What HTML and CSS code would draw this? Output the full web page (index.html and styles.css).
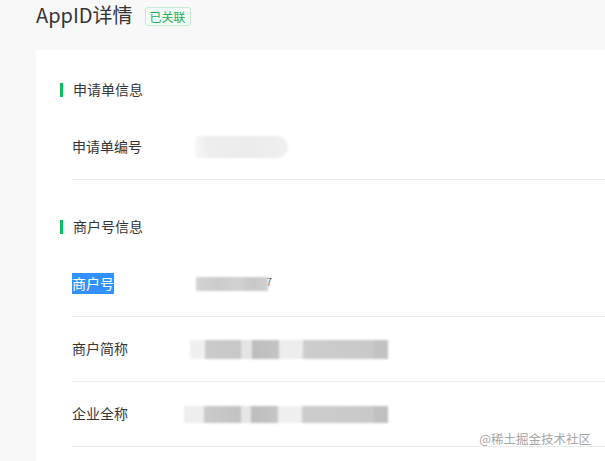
FILE: index.html
```html
<!DOCTYPE html>
<html lang="zh-CN">
<head>
<meta charset="utf-8">
<title>AppID详情</title>
<link rel="stylesheet" href="styles.css">
</head>
<body>
<div class="page">
  <header class="header">
    <h1 class="title">AppID详情</h1>
    <span class="badge">已关联</span>
  </header>
  <main class="card">
    <section class="section">
      <div class="section-head"><i class="bar"></i><span class="head-text">申请单信息</span></div>
      <div class="rows">
        <div class="row">
          <div class="label">申请单编号</div>
          <div class="value"><span class="blur blur-a"></span></div>
        </div>
      </div>
    </section>
    <section class="section section-2">
      <div class="section-head"><i class="bar"></i><span class="head-text">商户号信息</span></div>
      <div class="rows">
        <div class="row">
          <div class="label"><span class="selected">商户号</span></div>
          <div class="value"><span class="blur blur-b"></span><span class="tail">7</span></div>
        </div>
        <div class="row">
          <div class="label">商户简称</div>
          <div class="value value-c"><span class="blur blur-c"></span></div>
        </div>
        <div class="row">
          <div class="label">企业全称</div>
          <div class="value value-d"><span class="blur blur-d"></span></div>
        </div>
      </div>
    </section>
  </main>
  <div class="watermark">@稀土掘金技术社区</div>
</div>
</body>
</html>
```

FILE: styles.css
```css
* { box-sizing: border-box; }
html, body { margin: 0; padding: 0; }
body {
  background: #f8f8f8;
  font-family: "Noto Sans CJK SC", "Noto Sans", sans-serif;
  color: #353535;
  width: 605px;
  height: 461px;
  overflow: hidden;
}
.page { position: relative; height: 461px; }
.header {
  height: 32px;
  padding-left: 36px;
  display: flex;
  align-items: center;
  gap: 12px;
}
.title {
  margin: 0;
  font-size: 20px;
  font-weight: 400;
  line-height: 24px;
  color: #353535;
  padding-bottom: 2px;
}
.badge {
  display: inline-block;
  border: 1px solid #c4ecd4;
  background: #f3fcf6;
  color: #1aad5a;
  font-size: 12px;
  line-height: 17px;
  padding: 0 4px;
  border-radius: 3px;
}
.card {
  margin: 18px 0 0 36px;
  background: #fff;
  border-radius: 4px 0 0 0;
  padding: 30px 0 0 24px;
  height: 430px;
}
.section-head {
  height: 20px;
  display: flex;
  align-items: center;
  gap: 10px;
  font-size: 14px;
  color: #353535;
}
.head-text { padding-bottom: 2px; }
.bar {
  display: block;
  width: 3px;
  height: 14px;
  background: #07c160;
}
.rows { margin: 15px 0 0 12px; }
.section-2 { margin-top: 37px; }
.row {
  height: 65px;
  border-bottom: 1px solid #ececec;
  display: flex;
  align-items: center;
  font-size: 14px;
  color: #353535;
}
.label { width: 123px; flex: none; padding-bottom: 2px; }
.selected {
  display: inline-block;
  background: #3390ff;
  color: #fff;
  line-height: 21px;
}
.value { display: flex; align-items: center; }
.blur { display: block; filter: blur(1.2px); }
.blur-a {
  width: 93px;
  height: 22px;
  background: linear-gradient(90deg, #f6f6f6 0, #eeeeee 15%, #ececec 60%, #f0f0f0 100%);
  border-radius: 3px 11px 11px 3px;
}
.blur-b {
  width: 72px;
  height: 14px;
  margin-left: 1px;
  background: linear-gradient(90deg, #d4d4d4 0, #cacaca 30%, #d2d2d2 55%, #c8c8c8 80%, #d0d0d0 100%);
}
.tail { font-size: 11px; color: #666; margin-left: -2px; margin-top: -6px; }
.value-c { margin-left: -5px; }
.value-d { margin-left: -11px; }
.blur-c {
  width: 198px;
  height: 19px;
  background: linear-gradient(90deg,
    #f0f0f0 0, #f0f0f0 7.5%,
    #cbcbcb 7.5%, #c6c6c6 26%,
    #e4e4e4 26%, #e4e4e4 31.5%,
    #bdbdbd 31.5%, #c4c4c4 45%,
    #ededed 45%, #ededed 57%,
    #cdcdcd 57%, #c9c9c9 93%,
    #c2c2c2 93%, #c2c2c2 100%);
}
.blur-d {
  width: 204px;
  height: 17px;
  background: linear-gradient(90deg,
    #eeeeee 0, #eeeeee 10%,
    #cbcbcb 10%, #c2c2c2 28%,
    #e6e6e6 28%, #e6e6e6 33%,
    #bdbdbd 33%, #c6c6c6 46%,
    #f0f0f0 46%, #f0f0f0 58%,
    #cdcdcd 58%, #c9c9c9 93%,
    #c0c0c0 93%, #c0c0c0 100%);
}
.watermark {
  position: absolute;
  right: 14px;
  top: 430px;
  font-size: 12.5px;
  line-height: 18px;
  color: #a6a6a6;
}
```
